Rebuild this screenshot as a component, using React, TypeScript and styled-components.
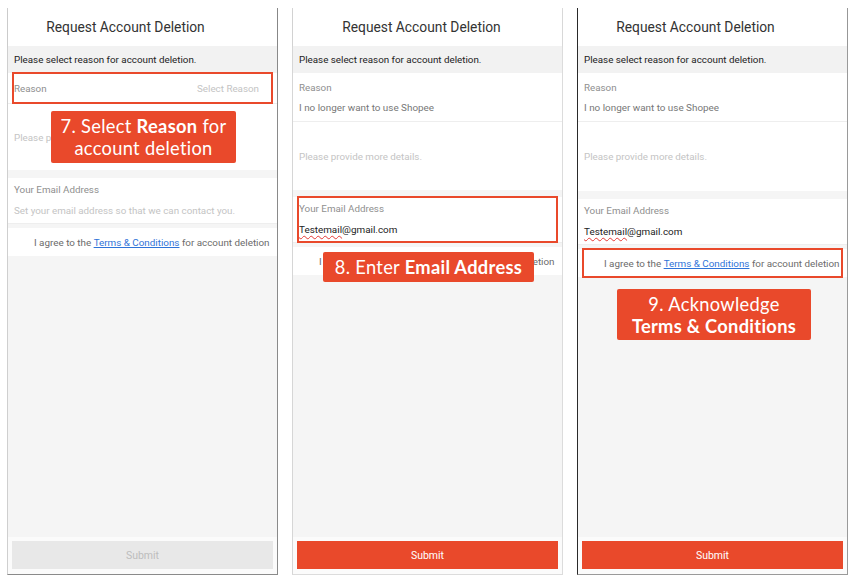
import React from 'react';
import styled, { createGlobalStyle, css } from 'styled-components';

const GlobalStyle = createGlobalStyle`
  html, body {
    margin: 0;
    padding: 0;
    background: #ffffff;
  }
  body {
    font-family: Roboto, 'Liberation Sans', Arial, sans-serif;
  }
`;

const ACCENT = '#e9492b';

// --- Layout ---

const Page = styled.div`
  display: flex;
  gap: 14px;
  padding: 8px 0 0 7px;
  width: 855px;
  height: 582px;
  box-sizing: border-box;
  overflow: hidden;
`;

type Edge = { left: string; right: string };

const Phone = styled.div<{ $edge: Edge }>`
  position: relative;
  width: 271px;
  height: 567px;
  display: flex;
  flex-direction: column;
  background: #f5f5f5;
  border-left: 1px solid ${(p) => p.$edge.left};
  border-right: 1px solid ${(p) => p.$edge.right};
  border-bottom: 1px solid ${(p) => p.$edge.right};
  box-sizing: border-box;
`;

const Header = styled.div<{ $shift: number }>`
  height: 38px;
  flex-shrink: 0;
  display: flex;
  align-items: center;
  justify-content: center;
  background: #fff;
  font-size: 13.8px;
  color: #333;
  padding-right: ${(p) => p.$shift}px;
  box-shadow: 0 1px 2px rgba(0, 0, 0, 0.05);
`;

const Notice = styled.div`
  height: 27px;
  flex-shrink: 0;
  display: flex;
  align-items: center;
  padding: 0 6px;
  font-size: 9.8px;
  color: #222;
  background: #f2f2f2;
`;

const highlight = css`
  &::after {
    content: '';
    position: absolute;
    top: -1px;
    bottom: -1px;
    left: 4px;
    right: 4px;
    border: 2px solid ${ACCENT};
    pointer-events: none;
  }
`;

const Row = styled.div<{ $marked?: boolean }>`
  position: relative;
  background: #fff;
  height: 31px;
  flex-shrink: 0;
  padding: 0 18px 0 6px;
  display: flex;
  justify-content: space-between;
  align-items: center;
  border-bottom: 1px solid #eeeeee;
  box-sizing: border-box;
  ${(p) => p.$marked && highlight}
`;

const Field = styled.div<{ $pad: number; $h: number; $gap: number; $marked?: boolean }>`
  position: relative;
  background: #fff;
  height: ${(p) => p.$h}px;
  flex-shrink: 0;
  padding: ${(p) => p.$pad}px 6px 0;
  display: flex;
  flex-direction: column;
  align-items: flex-start;
  gap: ${(p) => p.$gap}px;
  border-bottom: 1px solid #eeeeee;
  box-sizing: border-box;
  line-height: 12px;
  ${(p) => p.$marked && highlight}
`;

const Label = styled.span`
  font-size: 9.8px;
  color: #8f8f8f;
`;

const Hint = styled.span`
  font-size: 9.8px;
  color: #c4c4c4;
`;

const Value = styled.span<{ $dark?: boolean }>`
  font-size: 9.9px;
  color: ${(p) => (p.$dark ? '#222' : '#777')};
`;

const Typo = styled.span`
  text-decoration: underline wavy #e53935;
  text-decoration-thickness: 1px;
  text-underline-offset: 2px;
`;

const Details = styled.div<{ $h: number }>`
  height: ${(p) => p.$h}px;
  flex-shrink: 0;
  background: #fff;
  display: flex;
  align-items: center;
  padding: 0 6px;
  box-sizing: border-box;
`;

const Gap = styled.div<{ $h: number }>`
  height: ${(p) => p.$h}px;
  flex-shrink: 0;
`;

const Terms = styled.div<{ $marked?: boolean }>`
  position: relative;
  height: 28px;
  flex-shrink: 0;
  background: #fff;
  display: flex;
  align-items: center;
  padding-left: 26px;
  font-size: 9.85px;
  color: #6b6b6b;
  white-space: nowrap;
  ${(p) => p.$marked && highlight}
`;

const TermsLink = styled.span`
  color: #2f73d8;
  text-decoration: underline;
`;

const Spacer = styled.div`
  flex: 1;
`;

const Footer = styled.div`
  flex-shrink: 0;
  padding: 4px 4px 5px 4px;
  background: #fbfbfb;
`;

const SubmitButton = styled.div<{ $active?: boolean }>`
  height: 28px;
  display: flex;
  align-items: center;
  justify-content: center;
  font-size: 10.5px;
  background: ${(p) => (p.$active ? ACCENT : '#e8e8e8')};
  color: ${(p) => (p.$active ? '#fff' : '#bdbdbd')};
`;

const Callout = styled.div<{ $left: number; $top: number; $width: number; $height: number }>`
  position: absolute;
  left: ${(p) => p.$left}px;
  top: ${(p) => p.$top}px;
  width: ${(p) => p.$width}px;
  height: ${(p) => p.$height}px;
  background: ${ACCENT};
  border-radius: 2px;
  color: #fff;
  font-family: Lato, 'Open Sans', sans-serif;
  font-size: 18.3px;
  letter-spacing: 0.3px;
  line-height: 22px;
  text-align: center;
  white-space: nowrap;
  display: flex;
  flex-direction: column;
  justify-content: center;
  b {
    font-weight: 700;
  }
`;

// --- Screens ---

function Title({ shift }: { shift: number }) {
  return (
    <>
      <Header $shift={shift}>Request Account Deletion</Header>
      <Notice>Please select reason for account deletion.</Notice>
    </>
  );
}

function Submit({ active }: { active?: boolean }) {
  return (
    <>
      <Spacer />
      <Footer>
        <SubmitButton $active={active}>Submit</SubmitButton>
      </Footer>
    </>
  );
}

function TermsText() {
  return (
    <>
      I agree to the&nbsp;<TermsLink>Terms &amp; Conditions</TermsLink>&nbsp;for account deletion
    </>
  );
}

function ReasonField() {
  return (
    <Field $pad={9} $h={49} $gap={8}>
      <Label>Reason</Label>
      <Value>I no longer want to use Shopee</Value>
    </Field>
  );
}

function FilledEmail({ marked }: { marked?: boolean }) {
  return (
    <Field $pad={6} $h={46} $gap={9} $marked={marked}>
      <Label>Your Email Address</Label>
      <Value $dark>
        <Typo>Testemail</Typo>@gmail.com
      </Value>
    </Field>
  );
}

export default function App() {
  return (
    <>
      <GlobalStyle />
      <Page>
        <Phone $edge={{ left: '#cfcfcf', right: '#8a8a8a' }}>
          <Title shift={34} />
          <Row $marked>
            <Label>Reason</Label>
            <Hint>Select Reason</Hint>
          </Row>
          <Details $h={66}>
            <Hint>Please provide more details.</Hint>
          </Details>
          <Gap $h={8} />
          <Field $pad={6} $h={46} $gap={9}>
            <Label>Your Email Address</Label>
            <Hint>Set your email address so that we can contact you.</Hint>
          </Field>
          <Gap $h={4} />
          <Terms>
            <TermsText />
          </Terms>
          <Submit />
          <Callout $left={43} $top={103} $width={185} $height={52}>
            <span>
              7. Select <b>Reason</b> for
            </span>
            <span>account deletion</span>
          </Callout>
        </Phone>

        <Phone $edge={{ left: '#d6d6d6', right: '#dcdcdc' }}>
          <Title shift={12} />
          <ReasonField />
          <Details $h={68}>
            <Hint>Please provide more details.</Hint>
          </Details>
          <Gap $h={7} />
          <FilledEmail marked />
          <Gap $h={4} />
          <Terms>
            <TermsText />
          </Terms>
          <Submit active />
          <Callout $left={30} $top={244} $width={211} $height={30}>
            <span>
              8. Enter <b>Email Address</b>
            </span>
          </Callout>
        </Phone>

        <Phone $edge={{ left: '#2a2a2a', right: '#9a9a9a' }}>
          <Title shift={34} />
          <ReasonField />
          <Details $h={69}>
            <Hint>Please provide more details.</Hint>
          </Details>
          <Gap $h={8} />
          <FilledEmail />
          <Gap $h={4} />
          <Terms $marked>
            <TermsText />
          </Terms>
          <Submit active />
          <Callout $left={39} $top={281} $width={194} $height={51}>
            <span>9. Acknowledge</span>
            <span>
              <b>Terms &amp; Conditions</b>
            </span>
          </Callout>
        </Phone>
      </Page>
    </>
  );
}
